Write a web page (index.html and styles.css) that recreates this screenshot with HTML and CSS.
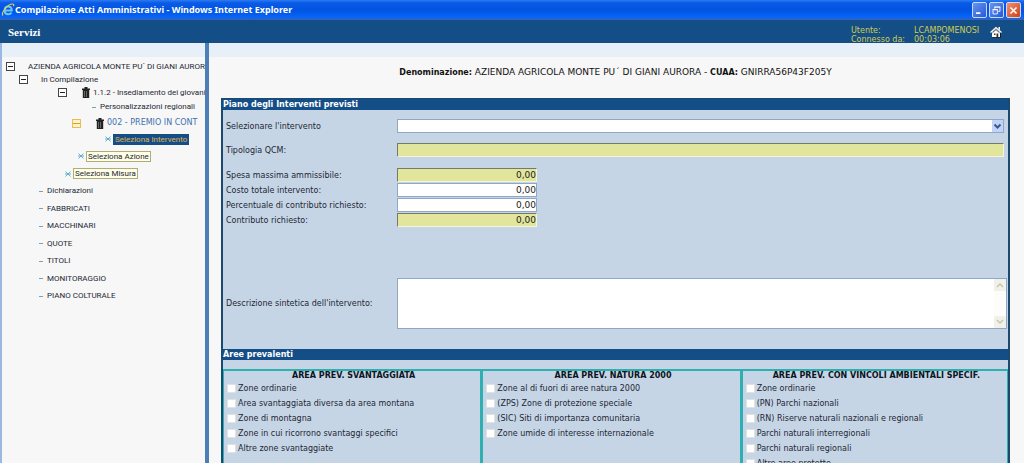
FILE: index.html
```html
<!DOCTYPE html>
<html lang="it">
<head>
<meta charset="utf-8">
<title>Compilazione Atti Amministrativi</title>
<link rel="stylesheet" href="styles.css">
</head>
<body>
<div class="titlebar">
  <svg class="ie" viewBox="0 0 14 14" aria-hidden="true"><path d="M3.6 7.4h7.2C10.700 4.500 9 3.600 7.200 3.600 5 3.600 3.600 5.300 3.600 7.500s1.500 3.800 3.600 3.800c1.500 0 2.600-.6 3.200-1.800" fill="none" stroke="#6cc8f8" stroke-width="2"/><path d="M2 12.500C-.5 10.500 6.500 1 11.500 1c1.500 0 1.500 1.200.9 2.300" fill="none" stroke="#e8c850" stroke-width="1.200"/></svg>
  <span class="titlebar-text">Compilazione Atti Amministrativi - Windows Internet Explorer</span>
  <div class="win-buttons">
    <button type="button" class="win" aria-label="Riduci a icona"><svg viewBox="0 0 15 15"><path d="M3.500 10.500h5" stroke="#fff" stroke-width="2"/></svg></button>
    <button type="button" class="win" aria-label="Ripristina"><svg viewBox="0 0 15 15"><path d="M5.500 5.500v-2h6v5h-2M5 3.500h7" fill="none" stroke="#fff"/><path d="M3.500 6.500h5v5h-5zM3 6.500h6" fill="none" stroke="#fff"/></svg></button>
    <button type="button" class="win close" aria-label="Chiudi"><svg viewBox="0 0 15 15"><path d="M4 4l7 7M11 4l-7 7" stroke="#fff" stroke-width="1.800"/></svg></button>
  </div>
</div>
<header class="header">
  <a class="services" href="#">Servizi</a>
  <dl class="session">
    <dt>Utente:</dt><dd>LCAMPOMENOSI</dd>
    <dt>Connesso da:</dt><dd>00:03:06</dd>
  </dl>
  <a class="home" href="#" aria-label="Home"><svg viewBox="0 0 12 12"><path d="M2 6v5.500h8V6L6 2.500z" fill="#fff"/><path d="M.5 6.500L6 1.500l5.500 5" fill="none" stroke="#fff" stroke-width="1.200"/><path d="M8.500 1h1.500v3L8.500 3z" fill="#fff"/><path d="M2.500 6.700L6 3.500l3.500 3.200" fill="none" stroke="#222" stroke-width=".9"/><path d="M4 7.500h1.500V9H4zM6.500 7.500h1.800v4H6.500z" fill="#333"/><path d="M2 11.500h8.500V7" fill="none" stroke="#111" stroke-width=".8"/></svg></a>
</header>
<div class="strip"></div>
<div class="layout">
  <nav class="sidebar">
    <ul class="tree">
      <li class="node"><button type="button" class="toggle" aria-label="Comprimi"></button><a class="root" href="#">AZIENDA AGRICOLA MONTE PU´ DI GIANI AUROR</a></li>
      <li class="node level1"><button type="button" class="toggle" aria-label="Comprimi"></button><a class="folder" href="#">In Compilazione</a></li>
      <li class="node level3"><button type="button" class="toggle" aria-label="Comprimi"></button><svg class="bin" viewBox="0 0 8 11" aria-hidden="true"><path d="M0 1.500h8v1.500H0zM2.500 0h3v1.500h-3zM.8 3h6.400v8H.8z" fill="#222"/><path d="M2.500 4v6M4.500 4v6" stroke="#888" stroke-width=".7"/></svg><a href="#">1.1.2 - Insediamento dei giovani</a></li>
      <li class="node tall level5"><span class="dash"></span><a href="#">Personalizzazioni regionali</a></li>
      <li class="node tall level4"><button type="button" class="toggle amber" aria-label="Comprimi"></button><svg class="bin" viewBox="0 0 8 11" aria-hidden="true"><path d="M0 1.500h8v1.500H0zM2.500 0h3v1.500h-3zM.8 3h6.400v8H.8z" fill="#222"/><path d="M2.500 4v6M4.500 4v6" stroke="#888" stroke-width=".7"/></svg><a class="premium" href="#">002 - PREMIO IN CONT</a></li>
      <li class="node tall level6"><svg class="star" viewBox="0 0 6 6" aria-hidden="true"><path d="M.5.5l5 5M5.500.5l-5 5M0 3h6" stroke="#55a8c8" stroke-width=".9"/></svg><a class="tag current" href="#">Seleziona Intervento</a></li>
      <li class="node item level4b"><svg class="star" viewBox="0 0 6 6" aria-hidden="true"><path d="M.5.5l5 5M5.500.5l-5 5M0 3h6" stroke="#55a8c8" stroke-width=".9"/></svg><a class="tag" href="#">Seleziona Azione</a></li>
      <li class="node item level3b"><svg class="star" viewBox="0 0 6 6" aria-hidden="true"><path d="M.5.5l5 5M5.500.5l-5 5M0 3h6" stroke="#55a8c8" stroke-width=".9"/></svg><a class="tag" href="#">Seleziona Misura</a></li>
      <li class="node item level2"><span class="dash"></span><a href="#">Dichiarazioni</a></li>
      <li class="node item level2"><span class="dash"></span><a href="#">FABBRICATI</a></li>
      <li class="node item level2"><span class="dash"></span><a href="#">MACCHINARI</a></li>
      <li class="node item level2"><span class="dash"></span><a href="#">QUOTE</a></li>
      <li class="node item level2"><span class="dash"></span><a href="#">TITOLI</a></li>
      <li class="node item level2"><span class="dash"></span><a href="#">MONITORAGGIO</a></li>
      <li class="node item level2"><span class="dash"></span><a href="#">PIANO COLTURALE</a></li>
    </ul>
  </nav>
  <main class="main">
    <p class="company"><b>Denominazione:</b> AZIENDA AGRICOLA MONTE PU´ DI GIANI AURORA - <b>CUAA:</b> GNIRRA56P43F205Y</p>
    <form class="panel">
      <h2 class="bar">Piano degli Interventi previsti</h2>
      <div class="fields">
        <div class="field wide"><label for="intervento">Selezionare l'intervento</label><select id="intervento" class="select"><option></option></select></div>
        <div class="field wide"><label for="qcm">Tipologia QCM:</label><input id="qcm" class="box locked" readonly></div>
        <div class="amounts">
          <div class="field"><label for="spesa">Spesa massima ammissibile:</label><input id="spesa" class="box amount locked" value="0,00" readonly></div>
          <div class="field"><label for="costo">Costo totale intervento:</label><input id="costo" class="box amount" value="0,00"></div>
          <div class="field"><label for="perc">Percentuale di contributo richiesto:</label><input id="perc" class="box amount" value="0,00"></div>
          <div class="field"><label for="contributo">Contributo richiesto:</label><input id="contributo" class="box amount locked" value="0,00" readonly></div>
        </div>
        <div class="field description"><label for="descrizione">Descrizione sintetica dell'intervento:</label>
          <div class="textarea-wrap"><textarea id="descrizione"></textarea>
            <div class="scroll" aria-hidden="true"><svg viewBox="0 0 12 12"><path d="M3 8l3-3 3 3" fill="none" stroke="#c6c5ae" stroke-width="1.500"/></svg><svg viewBox="0 0 12 12"><path d="M3 4l3 3 3-3" fill="none" stroke="#c6c5ae" stroke-width="1.500"/></svg></div>
          </div>
        </div>
      </div>
      <h2 class="bar">Aree prevalenti</h2>
      <div class="areas">
        <fieldset class="area"><legend>AREA PREV. SVANTAGGIATA</legend>
          <label><input type="checkbox">Zone ordinarie</label>
          <label><input type="checkbox">Area svantaggiata diversa da area montana</label>
          <label><input type="checkbox">Zone di montagna</label>
          <label><input type="checkbox">Zone in cui ricorrono svantaggi specifici</label>
          <label><input type="checkbox">Altre zone svantaggiate</label>
        </fieldset>
        <fieldset class="area"><legend>AREA PREV. NATURA 2000</legend>
          <label><input type="checkbox">Zone al di fuori di aree natura 2000</label>
          <label><input type="checkbox">(ZPS) Zone di protezione speciale</label>
          <label><input type="checkbox">(SIC) Siti di importanza comunitaria</label>
          <label><input type="checkbox">Zone umide di interesse internazionale</label>
        </fieldset>
        <fieldset class="area"><legend>AREA PREV. CON VINCOLI AMBIENTALI SPECIF.</legend>
          <label><input type="checkbox">Zone ordinarie</label>
          <label><input type="checkbox">(PN) Parchi nazionali</label>
          <label><input type="checkbox">(RN) Riserve naturali nazionali e regionali</label>
          <label><input type="checkbox">Parchi naturali interregionali</label>
          <label><input type="checkbox">Parchi naturali regionali</label>
          <label><input type="checkbox">Altre aree protette</label>
        </fieldset>
      </div>
    </form>
  </main>
</div>
</body>
</html>
```
FILE: styles.css
```css
* { box-sizing: border-box; }

body {
  margin: 0;
  height: 100vh;
  display: flex;
  flex-direction: column;
  overflow: hidden;
  background: #f7f7f7;
  color: #1d2733;
  font: 8px/12px "DejaVu Sans", Verdana, sans-serif;
}

a { color: inherit; text-decoration: none; }
svg { display: block; }
button { padding: 0; font: inherit; }

/* Window title bar */
.titlebar {
  flex: none;
  height: 20px;
  display: flex;
  align-items: center;
  padding: 0 3px 0 1px;
  background: linear-gradient(#2a7cf0 0, #0a5ae8 3px, #0054e0 10px, #0664fa 17px, #3a62b0 20px);
  color: #fff;
}
.ie { width: 14px; height: 14px; }
.titlebar-text { flex: 1; font: bold 9px/18px "Noto Sans", sans-serif; }
.win-buttons { display: flex; gap: 2px; }
.win {
  width: 15px;
  height: 16px;
  border: 1px solid #c8d8f8;
  border-radius: 2px;
  background: linear-gradient(135deg, #6a94f0, #2458d8);
}
.win.close { background: linear-gradient(135deg, #f09070, #d04018); }

/* Application header */
.header {
  flex: none;
  height: 23px;
  display: flex;
  align-items: center;
  padding: 0 22px 0 8px;
  background: #144e86;
}
.services { flex: 1; color: #fff; font: bold 11px/22px "Liberation Serif", serif; }
.session {
  display: grid;
  grid-template-columns: 63px 76px;
  align-self: flex-start;
  margin: 0;
  padding-top: 6px;
  color: #d2cc50;
  line-height: 9px;
}
.session dd { margin: 0; }
.home svg { width: 12px; height: 12px; }

.strip { flex: none; height: 14px; background: #e7f0f8; }

.layout { flex: 1; display: flex; min-height: 0; margin-top: -14px; }

/* Navigation tree */
.sidebar {
  flex: none;
  width: 209px;
  padding-top: 17px;
  overflow: hidden;
  border-left: 2px solid #9ab8e0;
  border-right: 4px solid #4b7fb5;
  font: 8px/12px Roboto, Arial, sans-serif;
  white-space: nowrap;
}
.tree { margin: 0; padding: 0 0 0 4px; list-style: none; }
.node { display: flex; align-items: center; height: 13px; }
.node.tall { height: 16px; }
.node.item { height: 18px; }
.node.item:nth-child(even) { height: 17px; }
.toggle {
  flex: none;
  width: 9px;
  height: 9px;
  border: 1px solid #444;
  background: linear-gradient(#222, #222) center / 5px 1px no-repeat #fff;
}
.toggle.amber { border-color: #e8bc58; background: linear-gradient(#d8a030, #d8a030) center / 7px 1px no-repeat #fff4c8; }
.root, .folder { margin-left: 13px; }
.level1 { padding-left: 13px; }
.level2 { padding-left: 33px; }
.level3 { padding-left: 52px; }
.level3b { padding-left: 59px; }
.level4 { padding-left: 66px; }
.level4b { padding-left: 72px; }
.level5 { padding-left: 86px; }
.level6 { padding-left: 99px; }
.bin { flex: none; width: 8px; height: 11px; margin: 0 3px 0 15px; }
.dash { flex: none; width: 4px; height: 1px; margin-right: 4px; background: #7aa0b8; }
.star { flex: none; width: 6px; height: 6px; margin-right: 2px; }
.tag { padding: 0 1px; border: 1px solid #b0ac78; background: #ffffe8; line-height: 9px; }
.tag.current { border-color: #144e86; background: #144e86; color: #e0b050; }
.premium { color: #3e70b0; font-family: "DejaVu Sans", Verdana, sans-serif; }

/* Main form */
.main { flex: 1; min-width: 0; padding: 23px 14px 0 12px; overflow: hidden; }
.company { margin: 0 0 19px; text-align: center; color: #111; font-size: 9px; }
.company b { font-size: 8px; }
.panel {
  min-height: 400px;
  border: 2px solid #1b4a70;
  border-top-width: 1px;
  background: #c6d5e6;
}
.bar {
  margin: 0;
  height: 11px;
  background: #144e86;
  color: #fff;
  font: bold 8px/11px "DejaVu Sans", Verdana, sans-serif;
}
.fields { padding: 9px 1px 20px 3px; }
.field { display: grid; grid-template-columns: 171px 140px; align-items: center; }
.field label { padding-top: 1px; }
.field.wide { grid-template-columns: 171px 1fr; height: 14px; margin: 0 3px 10px 0; }
.box, .select {
  width: 100%;
  height: 14px;
  margin: 0;
  padding: 0 1px;
  border: 1px solid #8fa8c8;
  border-radius: 0;
  background: #fff;
  color: #222;
  font: 9px/10px "DejaVu Sans", Verdana, sans-serif;
}
.box.locked { border-color: #75796a #f4f4dc #f4f4dc #75796a; background: #e1e69c; }
.box.amount { padding: 0; text-align: right; }
.select {
  appearance: none;
  background:
    url("data:image/svg+xml,%3Csvg xmlns='http://www.w3.org/2000/svg' viewBox='0 0 11 12'%3E%3Cpath fill='%23c2d3fa' d='M0 0h11v12H0z'/%3E%3Cpath d='M2.500 4.500l3 3 3-3' fill='none' stroke='%23405888' stroke-width='2'/%3E%3C/svg%3E") right center / 11px 12px no-repeat #fff;
}
.amounts { display: grid; gap: 1px; padding-top: 1px; }
.description { grid-template-columns: 171px 1fr; margin-top: 51px; }
.textarea-wrap { display: flex; height: 51px; border: 1px solid #8fa8c8; background: #fff; }
textarea { flex: 1; min-width: 0; border: 0; padding: 2px; resize: none; background: #fff; font: inherit; }
.scroll { width: 12px; display: flex; flex-direction: column; justify-content: space-between; background: #fcfcfa; }
.scroll svg { width: 12px; height: 12px; background: #f1f1e9; }

/* Area columns */
.areas {
  display: grid;
  grid-template-columns: 257fr 260fr 268fr;
  min-height: 200px;
  margin-top: 9px;
  border: solid #2fb0b0;
  border-width: 2px 1px;
}
.area { min-width: 0; margin: 0; padding: 0 0 0 3px; border: 0; border-left: 3px solid #2fb0b0; }
.area:first-child { border-left: 0; }
.area legend { float: left; width: 100%; padding: 0; text-align: center; font-weight: bold; line-height: 10px; color: #0c1420; }
.area label { clear: both; display: flex; align-items: center; gap: 2px; height: 15px; }
.area input { appearance: none; flex: none; width: 9px; height: 9px; margin: 0; border: 1px solid #e0e2de; background: #fff; }
```
